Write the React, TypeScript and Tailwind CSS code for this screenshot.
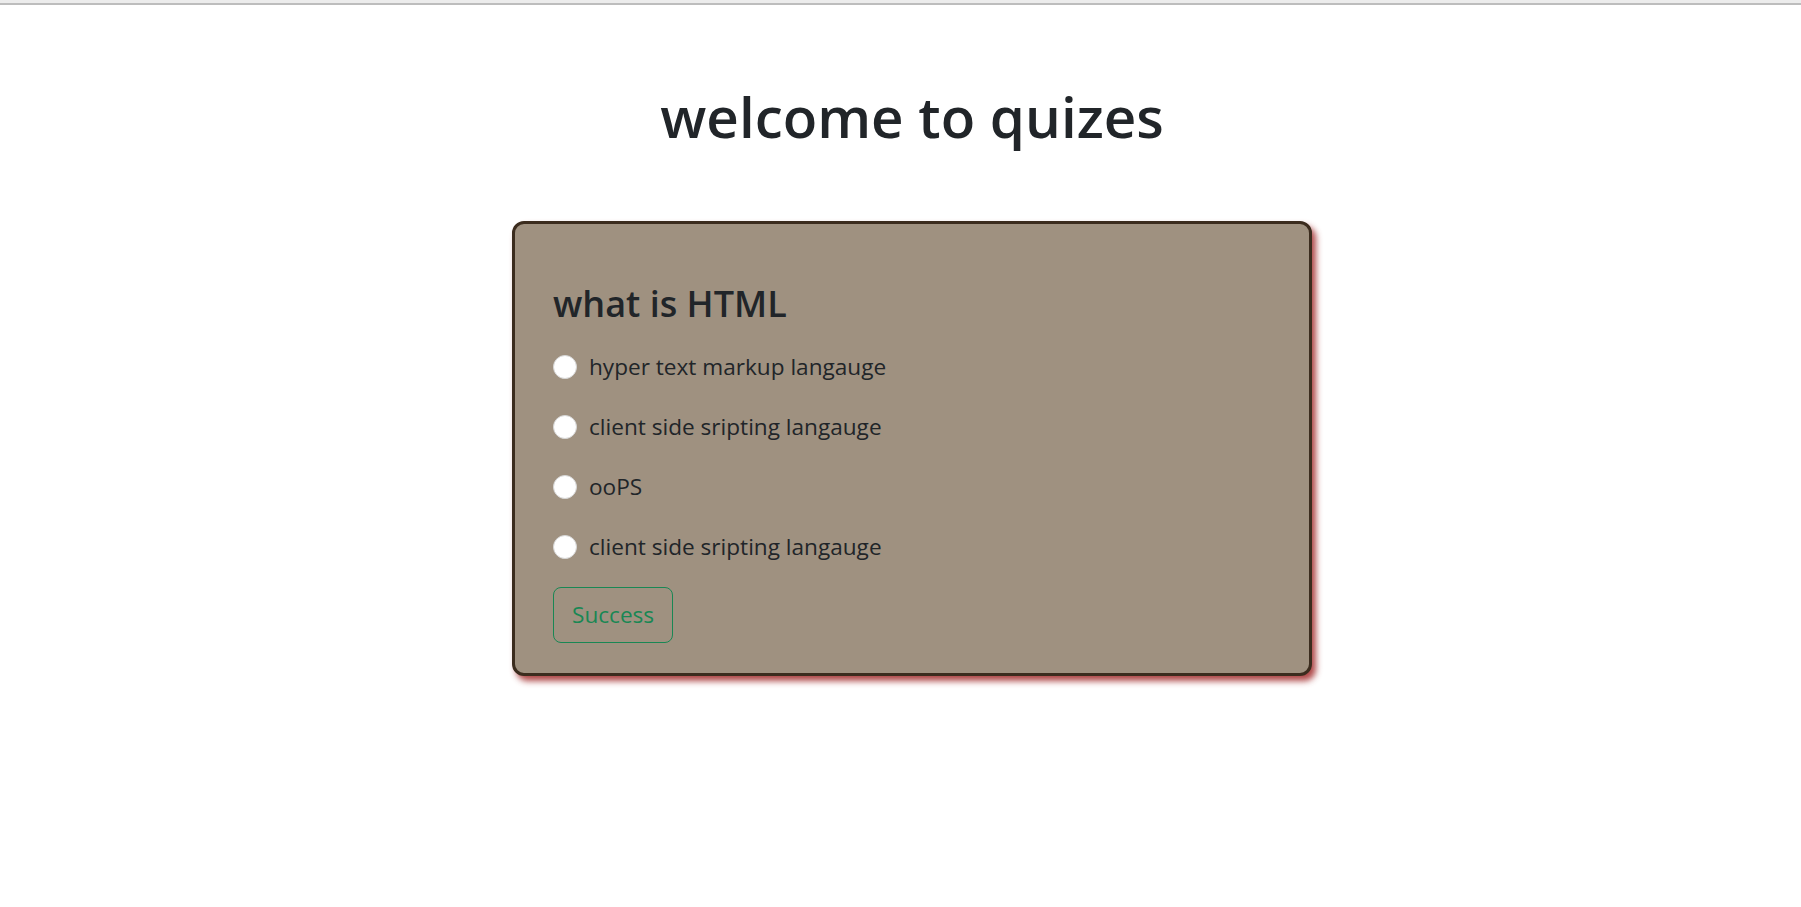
import React from 'react';

const options = [
  'hyper text markup langauge',
  'client side sripting langauge',
  'ooPS',
  'client side sripting langauge',
];

const App: React.FC = () => {
  return (
    <div className="min-h-screen bg-white text-[#212529]" style={{ fontFamily: '"Open Sans", "Noto Sans", sans-serif' }}>
      <div className="h-[3px] bg-[#ececec]" />
      <div className="h-[2px] bg-[#bdbdbd]" />

      <h1 className="mt-[76px] pl-[23px] text-center text-[56.5px] font-semibold leading-[72px]">welcome to quizes</h1>

      <div className="flex justify-center mt-[68px] pl-[23px]">
        <div className="w-[800px] rounded-[12px] border-[3px] border-[#3b2c1e] bg-[#9f9180] px-[38px] pt-[58px] pb-[30px] shadow-[4px_5px_6px_rgba(160,40,40,0.85)]">
          <h3 className="text-[36px] font-semibold leading-[43px] mb-[24px]">what is HTML</h3>

          <div className="flex flex-col gap-[24px]">
            {options.map((opt, i) => (
              <label key={i} className="flex items-center gap-[12px] text-[22.6px] leading-[36px]">
                <span className="inline-block h-[24px] w-[24px] rounded-full bg-white border border-[#d6d6d6]" />
                <span>{opt}</span>
              </label>
            ))}
          </div>

          <button className="mt-[22px] rounded-[8px] border border-[#198754] px-[18px] py-[9px] text-[22.6px] leading-[36px] text-[#198754]">
            Success
          </button>
        </div>
      </div>
    </div>
  );
};

export default App;
